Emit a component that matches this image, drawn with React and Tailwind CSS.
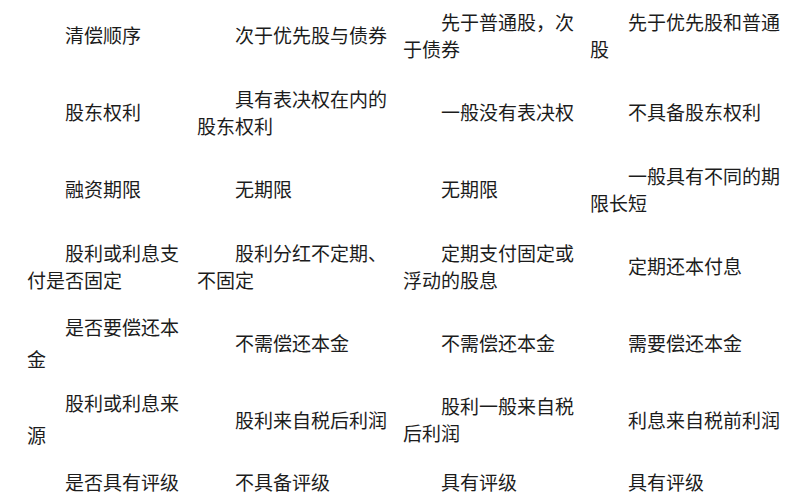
const rows = [
  {
    h: 'h-[77px]',
    cells: ['清偿顺序', '次于优先股与债券', '先于普通股，次于债券', '先于优先股和普通股'],
  },
  {
    h: 'h-[77px]',
    cells: ['股东权利', '具有表决权在内的股东权利', '一般没有表决权', '不具备股东权利'],
  },
  {
    h: 'h-[77px]',
    cells: ['融资期限', '无期限', '无期限', '一般具有不同的期限长短'],
  },
  {
    h: 'h-[77px]',
    cells: ['股利或利息支付是否固定', '股利分红不定期、不固定', '定期支付固定或浮动的股息', '定期还本付息'],
  },
  {
    h: 'h-[77px]',
    wide: true,
    cells: ['是否要偿还本金', '不需偿还本金', '不需偿还本金', '需要偿还本金'],
  },
  {
    h: 'h-[76px]',
    wide: true,
    cells: ['股利或利息来源', '股利来自税后利润', '股利一般来自税后利润', '利息来自税前利润'],
  },
  {
    h: 'h-[48px]',
    cells: ['是否具有评级', '不具备评级', '具有评级', '具有评级'],
  },
];

// content widths decide where each cell wraps
const cols = ['w-[170px] pr-[10px]', 'w-[206px] pr-[8px]', 'w-[187px] pr-[7px]', 'w-[200px]'];

export default function App() {
  return (
    <div
      className="w-[800px] h-[500px] overflow-hidden bg-white text-[#1c1c1c] text-[19px]"
      style={{ fontFamily: '"Noto Sans CJK SC", "Noto Sans", sans-serif' }}
    >
      <div className="-mt-[4px] pl-[27px]">
        {rows.map((row, r) => (
          <div key={r} className={`flex ${row.h}`}>
            {row.cells.map((text, c) => (
              <div key={c} className={`${cols[c]} shrink-0 flex items-center`}>
                <p
                  className={`indent-[38px] ${
                    row.wide && c === 0 ? 'leading-[32px]' : 'leading-[27px]'
                  }`}
                >
                  {text}
                </p>
              </div>
            ))}
          </div>
        ))}
      </div>
    </div>
  );
}
